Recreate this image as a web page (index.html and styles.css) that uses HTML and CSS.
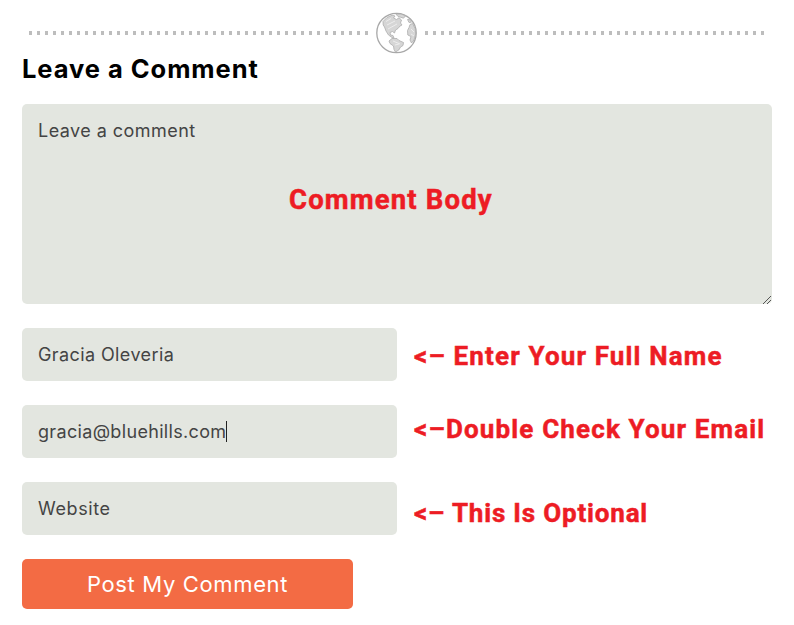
FILE: index.html
```
<!DOCTYPE html>
<html lang="en">
<head>
    <meta charset="UTF-8">
    <meta name="viewport" content="width=device-width, initial-scale=1.0">
    <title>Leave a Comment</title>
    <link rel="stylesheet" href="styles.css">
</head>
<body>
    <main class="comments">
        <!-- Dotted divider with globe -->
        <div class="divider">
            <span class="dots"></span>
            <svg class="globe" viewBox="0 0 42 42" width="42" height="42">
                <circle cx="20.5" cy="21" r="19.7" fill="#fff" stroke="#a8a8a8" stroke-width="1.3"/>
                <g fill="#d6d6d6" stroke="#adadad" stroke-width=".8" stroke-linejoin="round">
                    <path d="M7 9.5 L11 5.5 L16 3.2 L19 4 L17.5 6 L20.5 7.5 L23 5.8 L25.5 8 L24.5 11 L26 13 L24 14 L22 16.5 L19.5 18 L18.5 21 L16.5 19.5 L14 20.5 L14.5 23 L17 23.5 L18 26 L16 25.5 L12.5 23 L10 19 L8.5 15 L7.2 13 Z"/>
                    <path d="M20 2.2 L25 2 L29.5 3.8 L27.5 6.2 L24.5 5.2 L22 4.5 Z"/>
                    <path d="M13 29 L16 26.5 L21 26.5 L23 28.5 L27.5 30.5 L27 33.5 L24.5 35 L22.8 38 L19.5 40 L18 37.5 L17.5 34 L14 31.5 Z"/>
                    <path d="M34 12.5 L36.5 11.5 L39.2 16.5 L39.7 22 L38 28 L35.5 31 L34 28 L35 24.5 L31.8 23 L31.5 18.5 L33 15.5 Z"/>
                    <path d="M31.5 7.5 L33.5 7.5 L35.5 10.2 L33 10.5 Z"/>
                </g>
                <path d="M10 9.5l5-3M11 13l8-4M12 17l9-5M17 29l7 3M19 33l4-1M35 17l3 3M35 22l3 2" fill="none" stroke="#ededed" stroke-width="1"/>
            </svg>
            <span class="dots"></span>
        </div>

        <h2 class="title">Leave a Comment</h2>

        <form class="comment-form">
            <div class="body-wrap">
                <textarea class="field body-field" placeholder="Leave a comment"></textarea>
                <span class="note body-note">Comment Body</span>
                <svg class="grip" viewBox="0 0 9 9" width="9" height="9">
                    <path d="M0 9L8 1M4 9L8 5" stroke="#555" stroke-width="1"/>
                </svg>
            </div>
            <div class="row">
                <input class="field name-field" type="text" value="Gracia Oleveria">
                <span class="note name-note">&lt;– Enter Your Full Name</span>
            </div>
            <div class="row">
                <div class="email-wrap">
                    <input class="field email-field" type="text" value="gracia@bluehills.com">
                    <span class="caret"></span>
                </div>
                <span class="note email-note">&lt;–Double Check Your Email</span>
            </div>
            <div class="row">
                <input class="field site-field" type="text" placeholder="Website">
                <span class="note site-note">&lt;– This Is Optional</span>
            </div>
            <button class="submit" type="button">Post My Comment</button>
        </form>
    </main>
</body>
</html>
```
FILE: styles.css
```
/* Basic Reset */
* {
    margin: 0;
    padding: 0;
    box-sizing: border-box;
}

body {
    font-family: Inter, "Liberation Sans", sans-serif;
    background-color: #fff;
    color: #000;
    overflow: hidden;
}

.comments {
    width: 750px;
    margin: 0 0 0 22px;
    padding-top: 12px;
}

/* Divider */
.divider {
    display: flex;
    align-items: center;
    height: 42px;
    padding: 0 7px;
}

.dots {
    width: 339px;
    height: 4px;
    background: repeating-linear-gradient(to right, #bdbdbd 0, #bdbdbd 3px, transparent 3px, transparent 8px);
}

.globe {
    display: block;
    margin: 0 7px 0 8px;
}

.title {
    height: 50px;
    line-height: 30px;
    font-size: 25.5px;
    font-weight: 700;
    letter-spacing: 0.95px;
    white-space: nowrap;
}

/* Form */
.comment-form {
    display: flex;
    flex-direction: column;
    gap: 24px;
}

.field {
    display: block;
    width: 375px;
    height: 53px;
    padding: 0 16px;
    border: 0;
    border-radius: 5px;
    outline: 0;
    background-color: #e3e6e0;
    color: #444;
    font: 400 18px/22px Inter, "Liberation Sans", sans-serif;
    letter-spacing: 0.45px;
}

.field::placeholder {
    color: #444;
    opacity: 1;
}

.body-wrap {
    position: relative;
}

.body-field {
    width: 750px;
    height: 200px;
    padding-top: 16px;
    resize: none;
}

.name-field {
    letter-spacing: 0.4px;
}

.email-field {
    letter-spacing: 0.33px;
}

.site-field {
    letter-spacing: 0.6px;
}

.grip {
    position: absolute;
    right: 0;
    bottom: 0;
}

.row {
    display: flex;
    align-items: center;
    gap: 17px;
    height: 53px;
}

.email-wrap {
    position: relative;
}

.caret {
    position: absolute;
    left: 204px;
    top: 16px;
    width: 1px;
    height: 21px;
    background-color: #222;
}

/* Red notes */
.note {
    color: #ed1c24;
    font-family: Roboto, "Liberation Sans", sans-serif;
    font-size: 26px;
    font-weight: 700;
    line-height: 30px;
    letter-spacing: 1.15px;
    white-space: nowrap;
    -webkit-text-stroke: 0.5px #ed1c24;
}

.body-note {
    position: absolute;
    left: 267px;
    top: 81px;
    font-size: 27.5px;
    letter-spacing: 1.15px;
}

.name-note {
    padding-top: 2px;
}

.email-note {
    padding-bottom: 5px;
}

.site-note {
    padding-top: 9px;
    letter-spacing: 0.82px;
}

.submit {
    width: 331px;
    height: 50px;
    border: 0;
    border-radius: 5px;
    background-color: #f36b44;
    color: #fff;
    font: 400 22px/50px Inter, "Liberation Sans", sans-serif;
    letter-spacing: 0.65px;
}
```
